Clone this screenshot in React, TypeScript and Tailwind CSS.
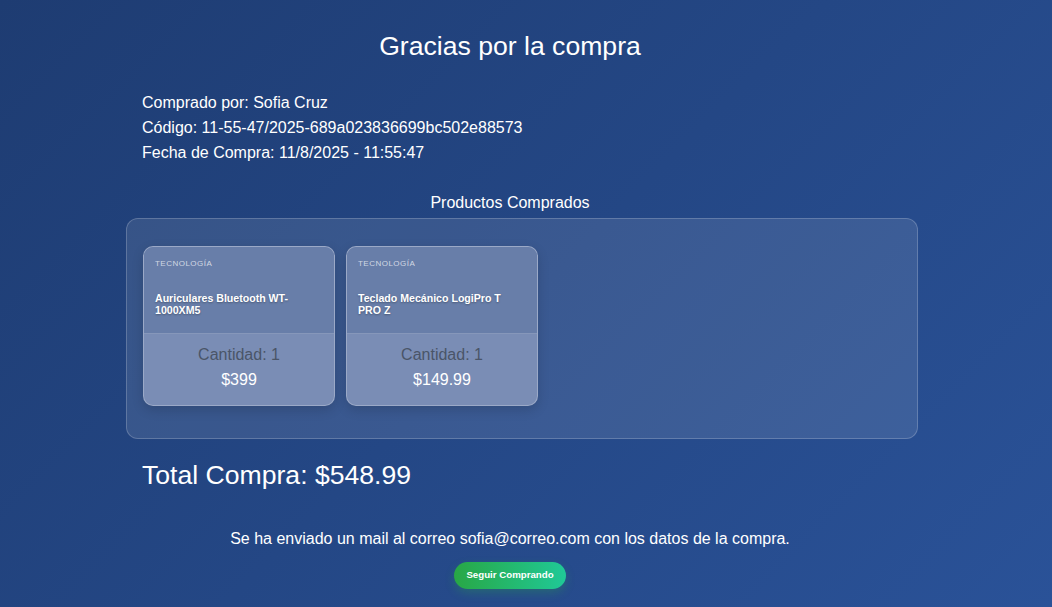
export default function App() {
  const products = [
    { category: "Tecnología", name: "Auriculares Bluetooth WT-1000XM5", qty: 1, price: "$399" },
    { category: "Tecnología", name: "Teclado Mecánico LogiPro T PRO Z", qty: 1, price: "$149.99" },
  ];

  return (
    <div
      className="min-h-[607px] w-full bg-[linear-gradient(135deg,#1e3c72_0%,#2a5298_100%)] text-white"
      style={{ fontFamily: '"Liberation Sans", Arial, sans-serif' }}
    >
      <div className="w-[1020px] pt-[30px] pb-4">
        <h1 className="text-center text-[26.6px] leading-[32px]">Gracias por la compra</h1>

        {/* Purchase info */}
        <div className="ml-[142px] mt-[28px] flex flex-col text-[16px] leading-[25px]">
          <p>Comprado por: Sofia Cruz</p>
          <p>Código: 11-55-47/2025-689a023836699bc502e88573</p>
          <p>Fecha de Compra: 11/8/2025 - 11:55:47</p>
        </div>

        <h2 className="mt-[28px] text-center text-[16px] leading-[20px]">Productos Comprados</h2>

        {/* Products box */}
        <div className="ml-[126px] mt-[5px] flex h-[221px] w-[792px] gap-[11px] rounded-xl border border-white/20 bg-white/10 px-[16px] pt-[27px]">
          {products.map((p) => (
            <div
              key={p.name}
              className="flex h-[160px] w-[192px] flex-col overflow-hidden rounded-[10px] border border-white/25 bg-[#7a8db5] shadow-[0_4px_12px_rgba(0,0,0,0.15)]"
            >
              <div className="h-[87px] border-b border-white/20 bg-[#687ea9] px-[11px] pt-[12px]">
                <p className="text-[8px] uppercase leading-[10px] tracking-[0.06em] text-white/70">{p.category}</p>
                <p className="mt-[23px] text-[10.6px] font-bold leading-[12px] [text-shadow:0_1px_2px_rgba(0,0,0,0.3)]">
                  {p.name}
                </p>
              </div>
              <div className="flex flex-col items-center pt-[10px]">
                <p className="text-[16px] leading-[22px] text-[#4a5568]">Cantidad: {p.qty}</p>
                <p className="mt-[3px] text-[16px] leading-[22px]">{p.price}</p>
              </div>
            </div>
          ))}
        </div>

        <p className="ml-[142px] mt-[20px] text-[26.6px] leading-[32px]">Total Compra: $548.99</p>

        <p className="mt-[38px] text-center text-[16px] leading-[20px]">
          Se ha enviado un mail al correo sofia@correo.com con los datos de la compra.
        </p>

        <div className="mt-[13px] flex justify-center">
          <button
            type="button"
            className="h-[27px] w-[112px] rounded-full bg-[linear-gradient(90deg,#28a745,#20c997)] text-[9.7px] font-bold text-white shadow-[0_4px_10px_rgba(40,167,69,0.3)]"
          >
            Seguir Comprando
          </button>
        </div>
      </div>
    </div>
  );
}
